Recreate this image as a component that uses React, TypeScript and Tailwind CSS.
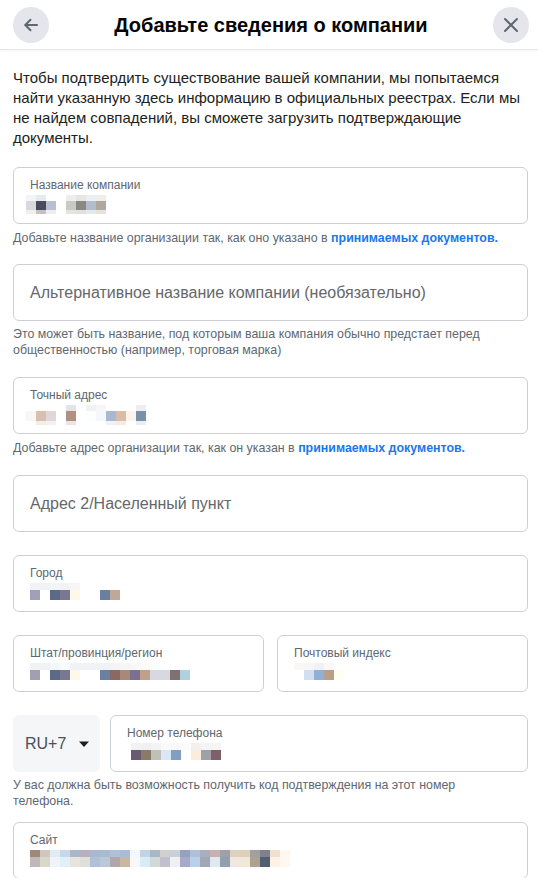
import React from "react";

type Cell = string;

function Mosaic({ rows, offset = 0 }: { rows: { h: number; cells: Cell[] }[]; offset?: number }) {
  return (
    <div className="flex flex-col" style={{ marginLeft: offset }}>
      {rows.map((r, i) => (
        <div key={i} className="flex" style={{ height: r.h }}>
          {r.cells.map((c, j) => (
            <div key={j} className="w-[10px] shrink-0" style={{ height: r.h, background: c || "transparent" }} />
          ))}
        </div>
      ))}
    </div>
  );
}

const faint = "#f1f2f5";

function Field({
  label,
  rows,
  offset = 0,
  className = "",
}: {
  label: string;
  rows: { h: number; cells: Cell[] }[];
  offset?: number;
  className?: string;
}) {
  return (
    <div className={"h-[57px] rounded-[6px] border border-[#ccd0d5] bg-white pl-[16px] pt-[9px] " + className}>
      <div className="text-[12px] leading-[16px] text-[#606770]">{label}</div>
      <div className="mt-[2px]">
        <Mosaic rows={rows} offset={offset} />
      </div>
    </div>
  );
}

function PlaceholderField({ text }: { text: string }) {
  return (
    <div className="flex h-[57px] items-center rounded-[6px] border border-[#ccd0d5] bg-white pl-[16px] text-[16px] text-[#65676b]">
      {text}
    </div>
  );
}

function Helper({ children, className = "" }: { children: React.ReactNode; className?: string }) {
  return <div className={"pr-[12px] text-[12.4px] leading-[16px] text-[#606770] " + className}>{children}</div>;
}

const Link = ({ children }: { children: React.ReactNode }) => (
  <span className="font-bold text-[#1877f2]">{children}</span>
);

export default function App() {
  return (
    <div className="w-[538px] min-h-[878px] bg-white font-['Liberation_Sans',Arial,sans-serif] text-[#1c1e21]">
      <div className="flex h-[50px] items-center justify-between border-b border-[#e4e6e9] pl-[13px] pr-[9px] shadow-[0_1px_2px_rgba(0,0,0,0.05)]">
        <button className="flex h-[36px] w-[36px] items-center justify-center rounded-full bg-[#e4e6eb]">
          <svg width="20" height="20" viewBox="0 0 20 20" fill="none" stroke="#606770" strokeWidth="2" strokeLinecap="round" strokeLinejoin="round">
            <path d="M16 10H4.5" />
            <path d="M9.5 4.8 4.3 10l5.2 5.2" />
          </svg>
        </button>
        <div className="text-[20px] font-bold leading-[24px] text-[#050505]">Добавьте сведения о компании</div>
        <button className="flex h-[36px] w-[36px] items-center justify-center rounded-full bg-[#e4e6eb]">
          <svg width="20" height="20" viewBox="0 0 20 20" fill="none" stroke="#606770" strokeWidth="2" strokeLinecap="round">
            <path d="M4 4l12 12M16 4 4 16" />
          </svg>
        </button>
      </div>

      <div className="pl-[13px] pr-[10px]">
        <p className="pt-[18px] text-[15px] leading-[20px] text-[#1c1e21]">
          Чтобы подтвердить существование вашей компании, мы попытаемся найти указанную здесь информацию в официальных реестрах. Если мы не найдем совпадений, вы сможете загрузить подтверждающие документы.
        </p>

        <Field
          className="mt-[19px]"
          label="Название компании"
          offset={-4}
          rows={[
            { h: 6, cells: ["#f4f4f6", "#e8eaee", "", "", "#eeeeee", "#e6e6e4", "#eceff2", "#eeeeec"] },
            { h: 9, cells: ["#d8d8de", "#4a4a5e", "#b8c0d0", "", "#c8c8c4", "#8a8880", "#b4bccc", "#b0a8a0"] },
            { h: 4, cells: ["#f0eeee", "#c8c0c0", "#eceef2", "", "#e4e4e0", "#e0e0dc", "#e4e8ee", "#e6e2dc"] },
          ]}
        />
        <Helper className="mt-[6px]">
          Добавьте название организации так, как оно указано в <Link>принимаемых документов.</Link>
        </Helper>

        <div className="mt-[18px]">
          <PlaceholderField text="Альтернативное название компании (необязательно)" />
        </div>
        <Helper className="mt-[5px]">
          Это может быть название, под которым ваша компания обычно предстает перед общественностью (например, торговая марка)
        </Helper>

        <Field
          className="mt-[19px]"
          label="Точный адрес"
          offset={-4}
          rows={[
            { h: 6, cells: ["", "", "", "", "#e4e4e8", "", "#f0f2f0", "#f6f8f8", "", "", "", "#eceef2"] },
            { h: 10, cells: ["#faf6f4", "#d8c0b0", "#e0d8d8", "", "#b09080", "", "#fcfdfe", "#f4f8fc", "#a8b8d0", "#d8bca8", "#fcf4ec", "#7890a8"] },
            { h: 4, cells: ["", "#f4ece6", "#f4f0f0", "", "#ece4e0", "", "", "", "#eef2f8", "#f4ece4", "", "#e8eef4"] },
          ]}
        />
        <Helper className="mt-[6px]">
          Добавьте адрес организации так, как он указан в <Link>принимаемых документов.</Link>
        </Helper>

        <div className="mt-[19px]">
          <PlaceholderField text="Адрес 2/Населенный пункт" />
        </div>

        <Field
          className="mt-[23px]"
          label="Город"
          rows={[
            { h: 7, cells: [faint, faint, "#f4f5f7", faint, "#f6f6f6", "", "", "", ""] },
            { h: 10, cells: ["#a0a0b8", "", "#5a6a88", "#7a7890", "#fff8e8", "", "", "#6a80a0", "#c0a898"] },
          ]}
        />

        <div className="mt-[23px] grid grid-cols-2 gap-[13px]">
          <Field
            label="Штат/провинция/регион"
            rows={[
              { h: 7, cells: [faint, faint, "#f4f6f8", "#f8fafc", faint, faint, faint, faint, "#f4f4f6", "#f6f6f6", "#f8f8f8", "#fafafa", "#fcfcfc"] },
              { h: 10, cells: ["#a0a0b0", "", "#5a6a88", "#787890", "#fff8e8", "", "", "#6a80a0", "#8a6a60", "#a88878", "#7a7090", "#c0a088", "#d8d8e0", "#d8d8e0", "#807070", "#b0d0e0"] },
            ]}
          />
          <Field
            label="Почтовый индекс"
            rows={[
              { h: 7, cells: ["#fbf8f4", "#f6f6f8", "#f2f2f4", "#f8f8f6"] },
              { h: 10, cells: ["", "#d0e0f0", "#90b0d8", "#b8a088", "#fffff0"] },
            ]}
          />
        </div>

        <div className="mt-[23px] flex gap-[10px]">
          <div className="flex h-[57px] w-[87px] shrink-0 items-center rounded-[6px] bg-[#f5f6f7] pl-[12px]">
            <span className="text-[16px] text-[#4b4f56]">RU+7</span>
            <svg className="ml-[12px]" width="12" height="8" viewBox="0 0 12 8">
              <path d="M1 1.5h10L6 7z" fill="#1c1e21" />
            </svg>
          </div>
          <Field
            className="flex-1"
            label="Номер телефона"
            offset={4}
            rows={[
              { h: 7, cells: ["#f2f2f4", "#f0f0f2", "#f4f4f6", "#fafafa", "#f6f8fa", "#fbfbfb", "#f2f0ee", "#f4f4f6", "#f6f4f4"] },
              { h: 10, cells: ["#6a5a70", "#8a7a68", "#c0c0b8", "#d8e8f8", "#80a0c0", "", "#fcecdc", "#a0a0a8", "#806068"] },
            ]}
          />
        </div>
        <Helper className="mt-[5px]">
          У вас должна быть возможность получить код подтверждения на этот номер телефона.
        </Helper>

        <Field
          className="mt-[13px]"
          label="Сайт"
          rows={[
            { h: 7, cells: ["#a08878", "#d0c8c0", "#e0ecf4", "#c8d8e8", "#a8b8c8", "#b8b0c0", "#a8b8d0", "#a8bcd0", "#b0c0d8", "#a8bcd8", "#f4f8fc", "#c0d4e4", "#a8b8c8", "#d0d0cc", "#c8d0d8", "#98a0c0", "#b0c0d8", "#a8b0c0", "#c8b0b0", "#a0a0a8", "#e0d0c0", "#e0d0b8", "#a0a0a0", "#808090", "#f0e0d0", "#fff8f0"] },
            { h: 10, cells: ["#c0b8b8", "#d8d8c8", "#f0f4f8", "#e0f0f8", "#e8e4dc", "#e0e0d8", "#b0c0d8", "#b8c8d8", "#b0a8a8", "#c8b8a0", "#f8f8f8", "#d8ecf8", "#d0d8d8", "#c0c0d0", "#f0f0f4", "#a8a8c8", "#b8d0e8", "#a0a8b8", "#e0e8f0", "#90a0b0", "#f0e8e0", "#f0e8d8", "#b0a090", "#506070", "#fff0e8", "#fff8f0"] },
          ]}
        />
      </div>
    </div>
  );
}
